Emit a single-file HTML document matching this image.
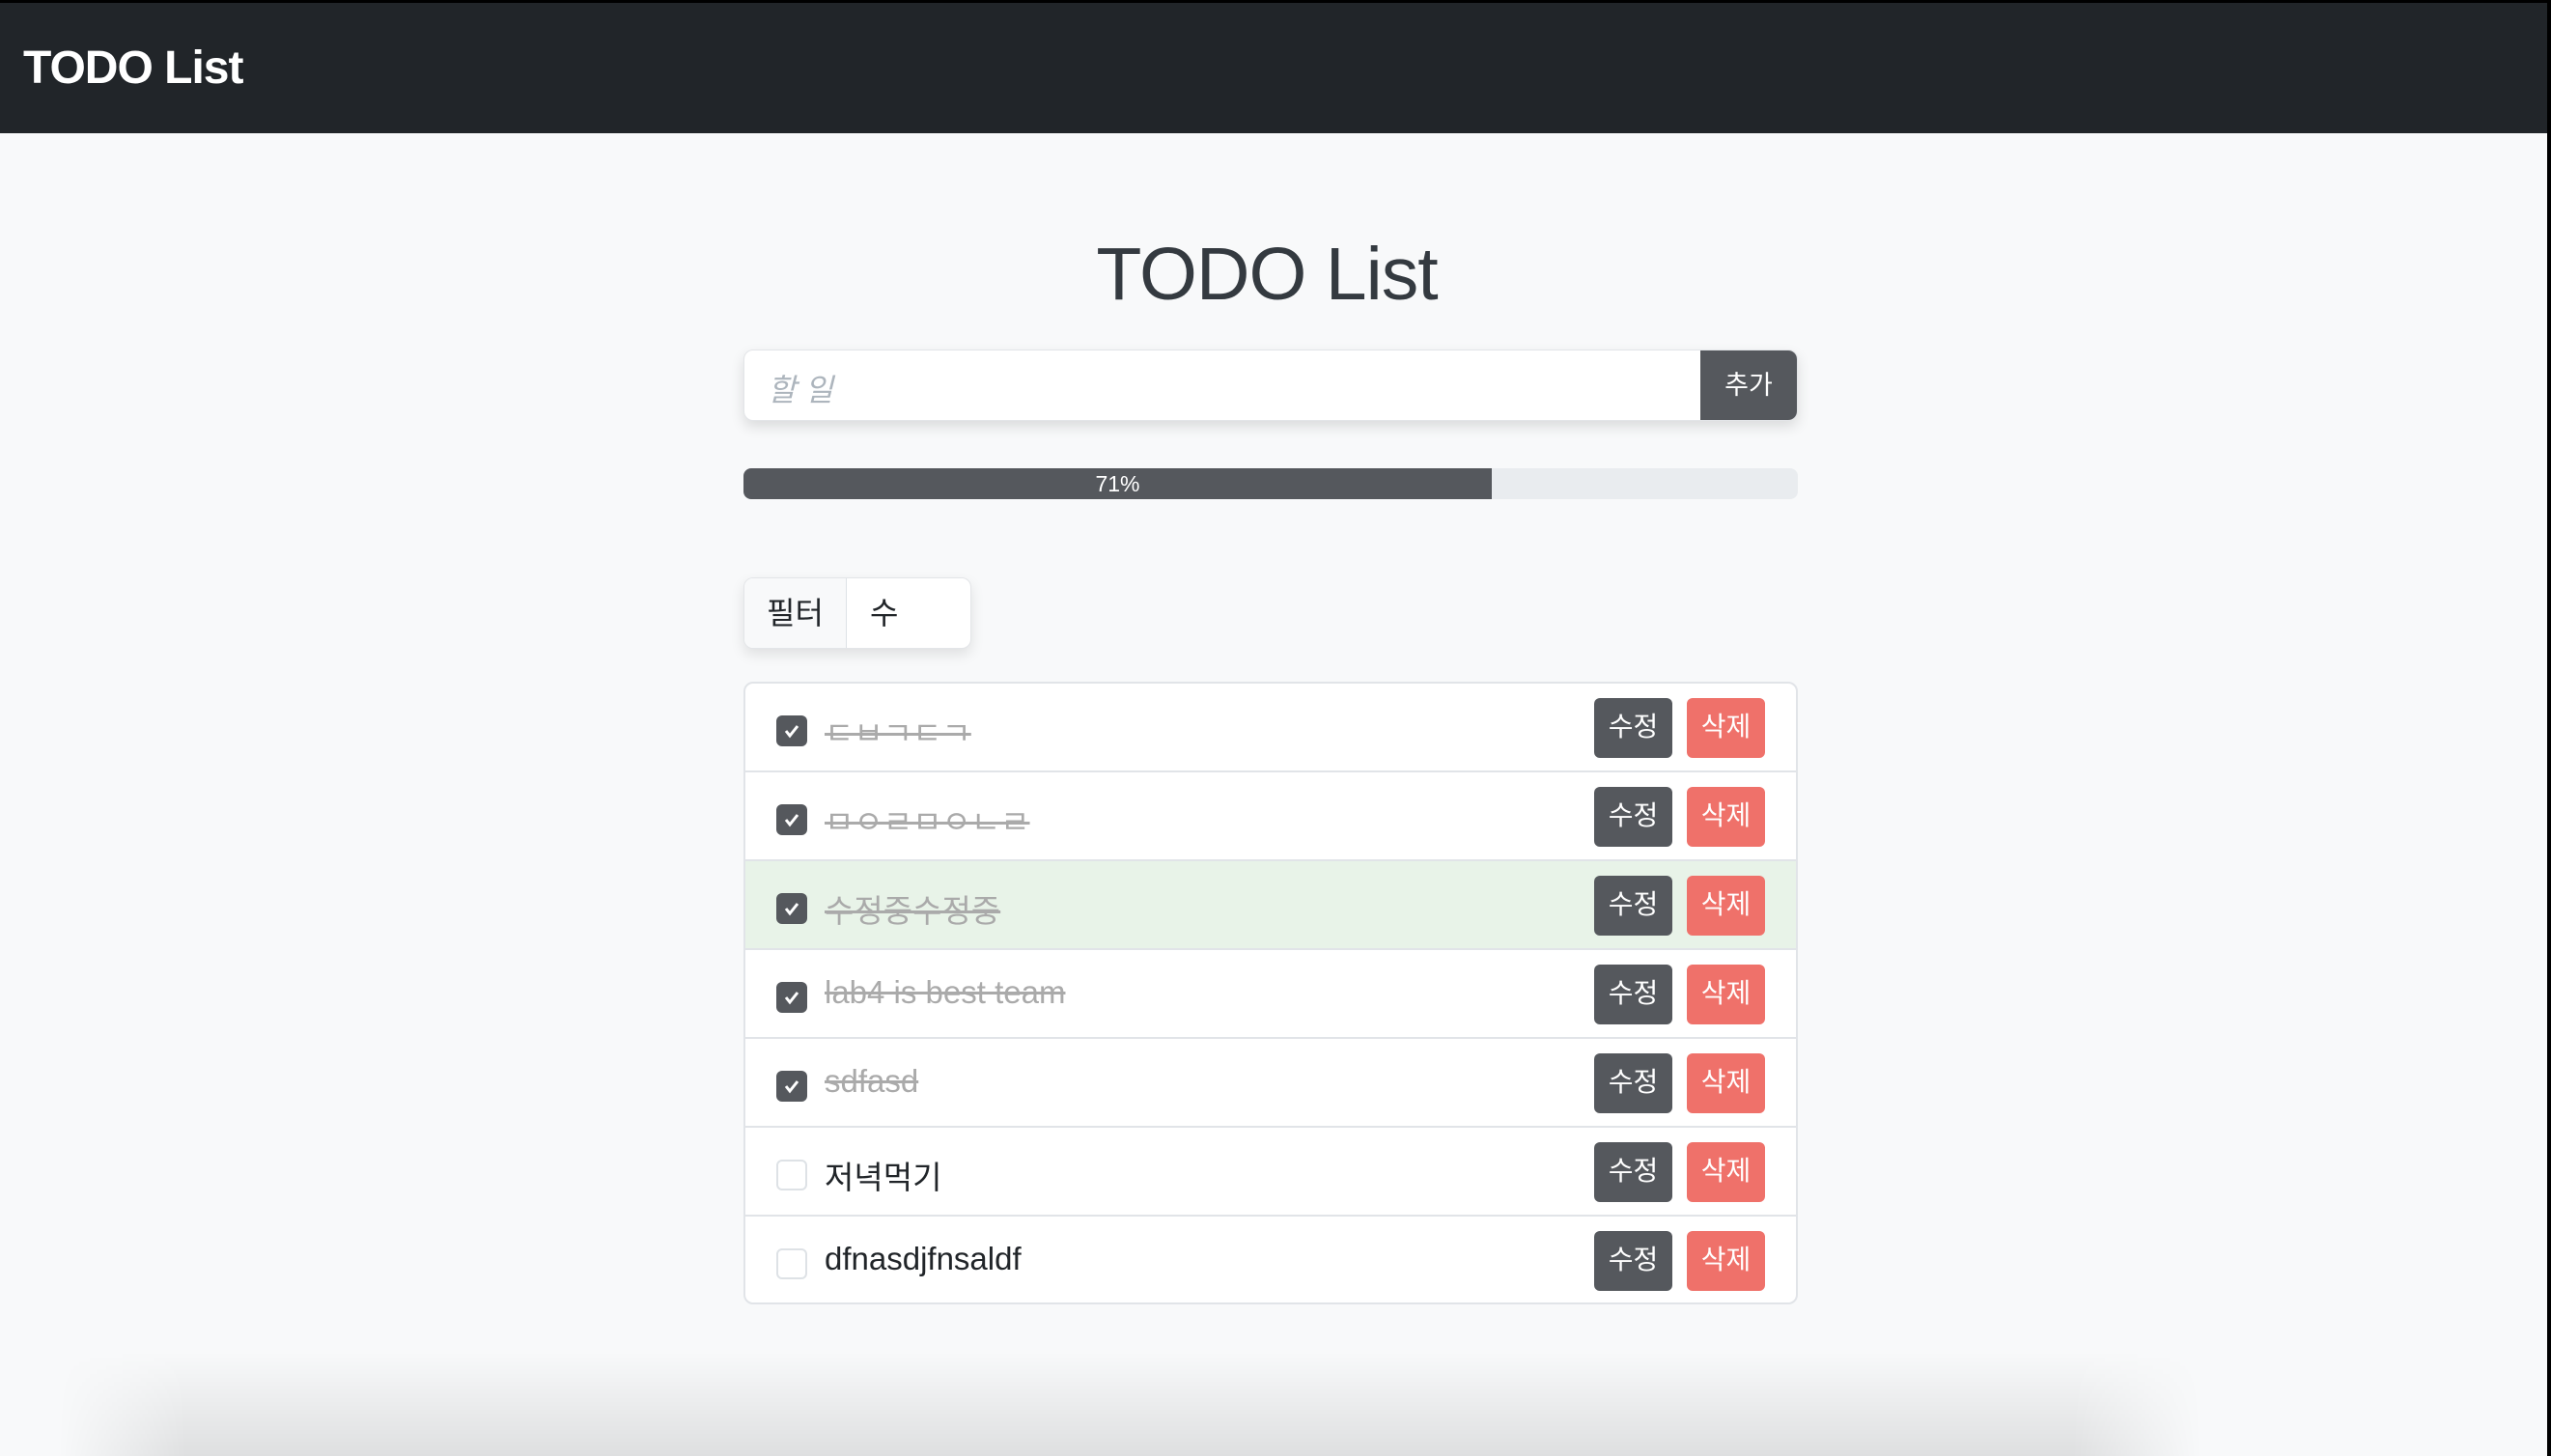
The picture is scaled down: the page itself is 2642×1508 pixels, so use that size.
<!DOCTYPE html>
<html><head><meta charset="utf-8"><style>
*{box-sizing:border-box;margin:0;padding:0}
html,body{width:2642px;height:1508px;overflow:hidden}
body{background:#f8f9fa;font-family:"Liberation Sans","Noto Sans CJK KR",sans-serif}
.wrap{position:relative;width:2642px;height:1508px;overflow:hidden}
.nav{position:absolute;left:0;top:0;width:2642px;height:138px;background:#212529;border-top:3px solid #000}
.nav h1{position:absolute;left:24px;top:40px;font-size:48px;color:#fff;font-weight:bold;letter-spacing:-1px}
.edge{position:absolute;right:0;top:0;width:4px;height:1508px;background:#000}
.title{position:absolute;left:0;width:2642px;top:240px;text-align:center;font-size:77px;color:#343a40;font-weight:500;letter-spacing:-1px;padding-right:18px}
.inp{position:absolute;left:770px;top:362px;width:1092px;height:74px;background:#fff;border-radius:10px;box-shadow:0 6px 14px rgba(0,0,0,.12);overflow:hidden;border:1px solid #e3e5e8}
.inp span{position:absolute;left:24px;top:16px;font-size:32px;color:#adb5bd;font-style:italic}
.inp b{position:absolute;right:0;top:0;width:100px;height:74px;background:#55585d;color:#fff;font-weight:normal;font-size:27px;text-align:center;line-height:72px}
.prog{position:absolute;left:770px;top:485px;width:1092px;height:32px;background:#e9ecef;border-radius:8px;overflow:hidden}
.prog div{width:775px;height:32px;background:#55585d;color:#fff;font-size:23px;text-align:center;line-height:32px}
.flt{position:absolute;left:770px;top:598px;width:236px;height:74px;background:#fff;border:1px solid #e3e5e8;border-radius:10px;box-shadow:0 6px 14px rgba(0,0,0,.1);overflow:hidden;font-size:32px;color:#212529}
.flt .a{position:absolute;left:0;top:0;width:106px;height:74px;background:#f8f9fa;border-right:1px solid #dee2e6;text-align:center;line-height:72px}
.flt .b{position:absolute;left:130px;top:0;line-height:72px}
.list{position:absolute;left:770px;top:706px;width:1092px;height:645px;background:#fff;border:2px solid #e1e4e8;border-radius:10px;overflow:hidden}
.row{height:92px;border-bottom:2px solid #e1e4e8;position:relative}
.row:last-child{border-bottom:none}
.row.g{background:#e8f3e8}
.cb{position:absolute;left:32px;top:33px;width:32px;height:32px;border-radius:6px;background:#55585d}
.cb.off{background:#fff;border:2px solid #dee2e6}
.cb svg{position:absolute;left:6px;top:6px}
.t{position:absolute;left:82px;top:25px;font-size:33px;color:#212529}
.t.d{color:#aaa;text-decoration:line-through}
.e,.x{position:absolute;top:15px;height:62px;width:81px;border-radius:6px;color:#fff;font-size:28px;text-align:center;line-height:60px}
.e{left:879px;background:#55585d}
.x{left:975px;background:#ef716a}
.sh{position:absolute;left:60px;top:1400px;width:2220px;height:108px;background:linear-gradient(to bottom,rgba(0,0,0,0),rgba(0,0,0,.1));-webkit-mask-image:linear-gradient(to right,transparent,#000 6%,#000 94%,transparent);mask-image:linear-gradient(to right,transparent,#000 6%,#000 94%,transparent)}
</style></head><body><div class="wrap">
<div class="nav"><h1>TODO List</h1></div>
<div class="title">TODO List</div>
<div class="inp"><span>할 일</span><b>추가</b></div>
<div class="prog"><div>71%</div></div>
<div class="flt"><div class="a">필터</div><div class="b">수</div></div>
<div class="list">
<div class="row"><div class="cb"><svg width="20" height="20" viewBox="0 0 20 20"><path d="M4 10l4 5 8-10" stroke="#fff" stroke-width="3" fill="none"/></svg></div><div class="t d">ㄷㅂㄱㄷㄱ</div><div class="e">수정</div><div class="x">삭제</div></div>
<div class="row"><div class="cb"><svg width="20" height="20" viewBox="0 0 20 20"><path d="M4 10l4 5 8-10" stroke="#fff" stroke-width="3" fill="none"/></svg></div><div class="t d">ㅁㅇㄹㅁㅇㄴㄹ</div><div class="e">수정</div><div class="x">삭제</div></div>
<div class="row g"><div class="cb"><svg width="20" height="20" viewBox="0 0 20 20"><path d="M4 10l4 5 8-10" stroke="#fff" stroke-width="3" fill="none"/></svg></div><div class="t d">수정중수정중</div><div class="e">수정</div><div class="x">삭제</div></div>
<div class="row"><div class="cb"><svg width="20" height="20" viewBox="0 0 20 20"><path d="M4 10l4 5 8-10" stroke="#fff" stroke-width="3" fill="none"/></svg></div><div class="t d">lab4 is best team</div><div class="e">수정</div><div class="x">삭제</div></div>
<div class="row"><div class="cb"><svg width="20" height="20" viewBox="0 0 20 20"><path d="M4 10l4 5 8-10" stroke="#fff" stroke-width="3" fill="none"/></svg></div><div class="t d">sdfasd</div><div class="e">수정</div><div class="x">삭제</div></div>
<div class="row"><div class="cb off"></div><div class="t">저녁먹기</div><div class="e">수정</div><div class="x">삭제</div></div>
<div class="row"><div class="cb off"></div><div class="t">dfnasdjfnsaldf</div><div class="e">수정</div><div class="x">삭제</div></div>
</div>
<div class="sh"></div>
<div class="edge"></div>
</div></body></html>
